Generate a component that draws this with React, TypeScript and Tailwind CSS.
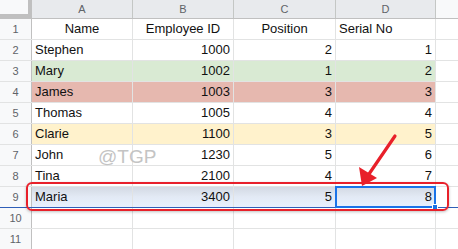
import React from "react";

type Row = { n: number; name: string; id: string; pos: string; serial: string; bg?: string };

const ROWS: Row[] = [
  { n: 2, name: "Stephen", id: "1000", pos: "2", serial: "1" },
  { n: 3, name: "Mary", id: "1002", pos: "1", serial: "2", bg: "bg-[#d9ead3]" },
  { n: 4, name: "James", id: "1003", pos: "3", serial: "3", bg: "bg-[#e6b8af]" },
  { n: 5, name: "Thomas", id: "1005", pos: "4", serial: "4" },
  { n: 6, name: "Clarie", id: "1100", pos: "3", serial: "5", bg: "bg-[#fff2cc]" },
  { n: 7, name: "John", id: "1230", pos: "5", serial: "6" },
  { n: 8, name: "Tina", id: "2100", pos: "4", serial: "7" },
];

const cell = "h-full shrink-0 border-r border-[#e2e3e3] px-[3px] flex items-center";
const widths = ["w-[101px]", "w-[101px]", "w-[102px]", "w-[100px]"];

function RowNum({ n }: { n: number | string }) {
  return (
    <div className="flex h-full w-[32px] shrink-0 items-center justify-center border-r border-[#c0c0c0] bg-[#f8f9fa] text-[11px] text-[#5f6368]">
      {n}
    </div>
  );
}

export default function App() {
  return (
    <div
      className="relative h-[249px] w-[458px] overflow-hidden bg-white text-[13px] text-[#111]"
      style={{ fontFamily: '"Liberation Sans", Arial, sans-serif' }}
    >
      {/* Column headers */}
      <div className="flex h-[19px] border-b border-[#c0c0c0]">
        <div className="h-full w-[32px] shrink-0 bg-[#c0c0c0] pb-[4px] pr-[4px]">
          <div className="h-full w-full bg-[#f8f9fa]" />
        </div>
        {["A", "B", "C", "D"].map((c, i) => (
          <div
            key={c}
            className={`${widths[i]} flex h-full shrink-0 items-center justify-center border-r border-[#c4c7c5] bg-[#e8eaed] text-[11px] text-[#5f6368]`}
          >
            {c}
          </div>
        ))}
        <div className="h-full flex-1 bg-[#f8f9fa]" />
      </div>

      {/* Row 1 */}
      <div className="flex h-[21px] border-b border-[#e2e3e3]">
        <RowNum n={1} />
        <div className={`${cell} ${widths[0]} justify-center`}>Name</div>
        <div className={`${cell} ${widths[1]} justify-center`}>Employee ID</div>
        <div className={`${cell} ${widths[2]} justify-center`}>Position</div>
        <div className={`${cell} ${widths[3]}`}>Serial No</div>
        <div className="flex-1" />
      </div>

      {ROWS.map((r) => (
        <div key={r.n} className="flex h-[21px] border-b border-[#e2e3e3]">
          <RowNum n={r.n} />
          <div className={`flex h-full ${r.bg ?? ""}`}>
            <div className={`${cell} ${widths[0]}`}>{r.name}</div>
            <div className={`${cell} ${widths[1]} justify-end`}>{r.id}</div>
            <div className={`${cell} ${widths[2]} justify-end`}>{r.pos}</div>
            <div className={`${cell} ${widths[3]} justify-end`}>{r.serial}</div>
          </div>
          <div className="flex-1" />
        </div>
      ))}

      {/* Row 9 (selected) */}
      <div className="flex h-[21px] border-b border-[#2f5fb8]">
        <RowNum n={9} />
        <div className="flex h-full bg-gradient-to-b from-[#d3d9e3] via-[#e3eaf5] to-[#e8f0fe]">
          <div className={`${cell} ${widths[0]}`}>Maria</div>
          <div className={`${cell} ${widths[1]} justify-end`}>3400</div>
          <div className={`${cell} ${widths[2]} justify-end`}>5</div>
          <div className={`${cell} ${widths[3]} relative justify-end`}>
            8
            <div className="absolute -left-[1px] -top-[1px] h-[22px] w-[101px] border-2 border-[#1a73e8]" />
            <div className="absolute -bottom-[3px] -right-[3px] h-[6px] w-[6px] border border-white bg-[#1a73e8]" />
          </div>
        </div>
        <div className="flex-1" />
      </div>

      {[10, 11].map((n) => (
        <div key={n} className="flex h-[21px] border-b border-[#e2e3e3]">
          <RowNum n={n} />
          {widths.map((w) => (
            <div key={w + n} className={`${cell} ${w}`} />
          ))}
          <div className="flex-1" />
        </div>
      ))}

      {/* Watermark */}
      <div className="pointer-events-none absolute left-[98px] top-[143px] text-[19px] text-[#c4c4c4]">@TGP</div>

      {/* Red highlight around row 9 */}
      <div className="pointer-events-none absolute left-[26px] top-[182px] h-[29px] w-[423px] rounded-[6px] border-2 border-[#e8202a] shadow-[0_1px_3px_rgba(0,0,0,0.25)]" />

      {/* Arrow */}
      <svg className="pointer-events-none absolute left-0 top-0" width="458" height="249">
        <line x1="395" y1="136" x2="369" y2="174" stroke="#e8202a" strokeWidth="3.2" strokeLinecap="round" />
        <polygon points="362,186 359,167 377,178" fill="#e8202a" />
      </svg>
    </div>
  );
}
